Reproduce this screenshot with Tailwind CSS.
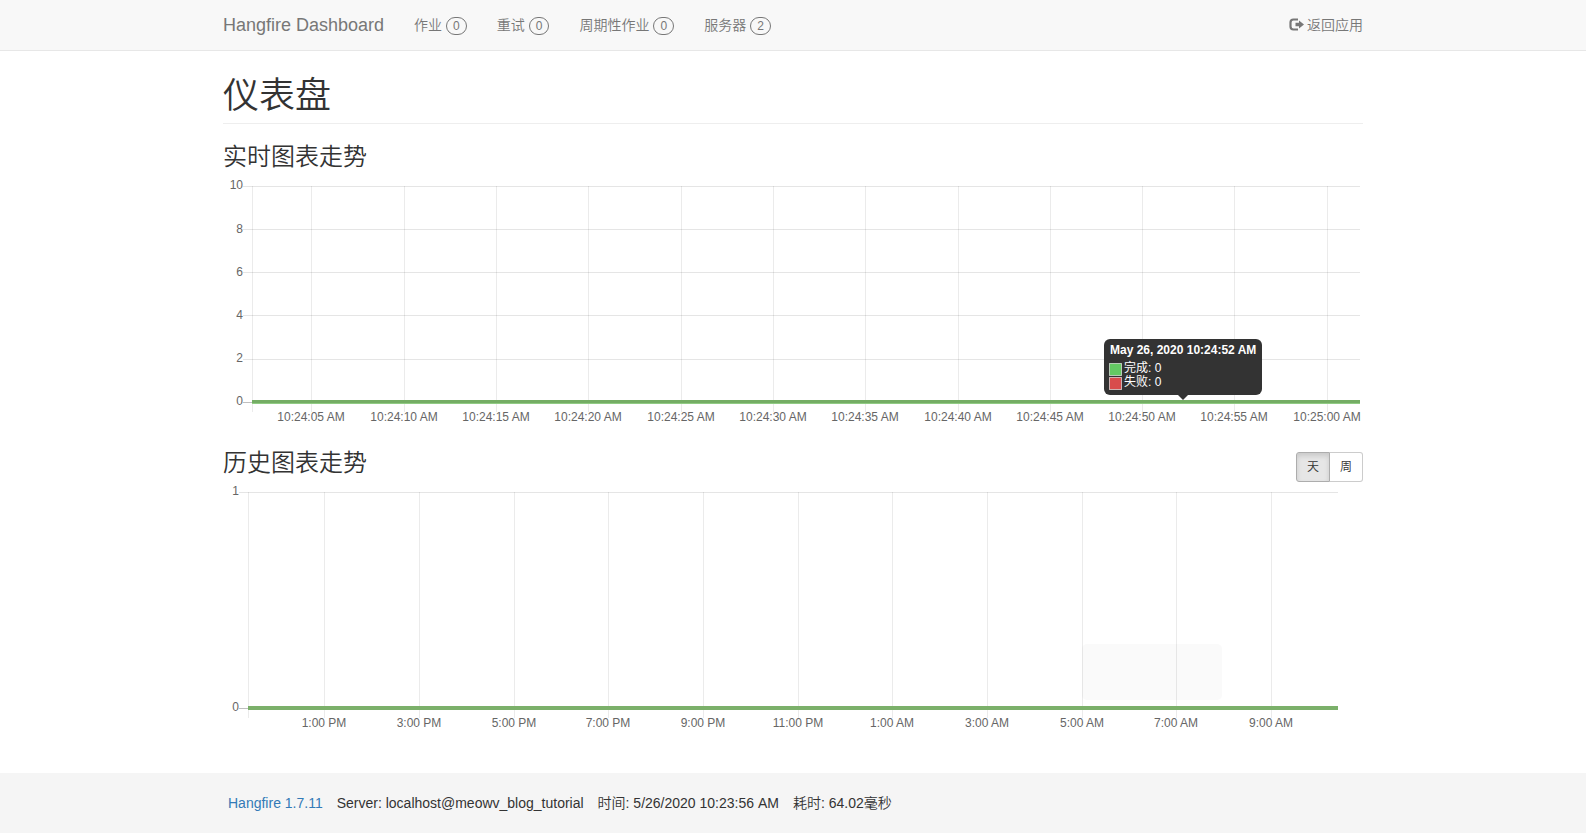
<!DOCTYPE html>
<html lang="zh-CN">
<head>
<meta charset="utf-8">
<meta name="viewport" content="width=device-width, initial-scale=1">
<title>仪表盘 - Hangfire Dashboard</title>
<script src="https://cdn.jsdelivr.net/npm/@tailwindcss/browser@4"></script>
</head>
<body class="flex min-h-screen flex-col bg-white font-['Liberation_Sans','Noto_Sans_CJK_SC',sans-serif] text-sm leading-5 font-[350] text-[#333]">
<header class="border-b border-[#e7e7e7] bg-[#f8f8f8] text-[#777]">
  <nav class="mx-auto flex h-[50px] max-w-[1140px] items-center">
    <a href="#" class="mr-[30px] text-lg leading-5">Hangfire Dashboard</a>
    <div class="flex gap-[30px]">
      <a href="#" class="flex items-center gap-1">作业 <span class="mt-px h-[18px] rounded-full border border-[#777] px-[6px] text-xs leading-4">0</span></a>
      <a href="#" class="flex items-center gap-1">重试 <span class="mt-px h-[18px] rounded-full border border-[#777] px-[6px] text-xs leading-4">0</span></a>
      <a href="#" class="flex items-center gap-1">周期性作业 <span class="mt-px h-[18px] rounded-full border border-[#777] px-[6px] text-xs leading-4">0</span></a>
      <a href="#" class="flex items-center gap-1">服务器 <span class="mt-px h-[18px] rounded-full border border-[#777] px-[6px] text-xs leading-4">2</span></a>
    </div>
    <a href="#" class="ml-auto flex items-center gap-[3px]">
      <svg class="h-[14px] w-[15px]" viewBox="0 0 15 14" aria-hidden="true"><path d="M9 1.500H4.500Q1.500 1.500 1.500 4.500v4Q1.500 11.500 4.500 11.500H9" fill="none" stroke="currentColor" stroke-width="2.200"/><path d="M10 2.500 15 6.500l-5 4V8.200H6.500V4.800H10z" fill="currentColor"/></svg>
      返回应用
    </a>
  </nav>
</header>

<main class="mx-auto w-full max-w-[1140px] grow pt-[25px]">
  <h1 class="mb-5 border-b border-[#eee] pb-[7px] text-4xl leading-10 font-[350]">仪表盘</h1>

  <section>
    <h3 class="mb-[10px] text-2xl leading-[26px] font-[350]">实时图表走势</h3>
    <svg class="block h-auto w-full overflow-visible" viewBox="0 0 1140 250" role="img" aria-label="实时图表走势">
      <path d="M20 6.500H1137M20 49.500H1137M20 92.500H1137M20 135.500H1137M20 179.500H1137" stroke="#000" stroke-opacity=".1"/>
      <path d="M20 222.500H29" stroke="#000" stroke-opacity=".25"/>
      <path d="M29.500 6V232M88.500 6V232M181.500 6V232M273.500 6V232M365.500 6V232M458.500 6V232M550.500 6V232M642.500 6V232M735.500 6V232M827.500 6V232M919.500 6V232M1011.500 6V232M1104.500 6V232" stroke="#000" stroke-opacity=".08"/>
      <path d="M29 221.500H1137" stroke="#74ad64" stroke-width="3"/>
      <path d="M29 223.500H1137" stroke="#90cb83"/>
      <g class="fill-[#666] text-xs" text-anchor="end">
        <text x="20" y="9">10</text><text x="20" y="53">8</text><text x="20" y="96">6</text><text x="20" y="139">4</text><text x="20" y="182">2</text><text x="20" y="225">0</text>
      </g>
      <g class="fill-[#666] text-xs" text-anchor="middle">
        <text x="88" y="241">10:24:05 AM</text><text x="181" y="241">10:24:10 AM</text><text x="273" y="241">10:24:15 AM</text><text x="365" y="241">10:24:20 AM</text><text x="458" y="241">10:24:25 AM</text><text x="550" y="241">10:24:30 AM</text><text x="642" y="241">10:24:35 AM</text><text x="735" y="241">10:24:40 AM</text><text x="827" y="241">10:24:45 AM</text><text x="919" y="241">10:24:50 AM</text><text x="1011" y="241">10:24:55 AM</text><text x="1104" y="241">10:25:00 AM</text>
      </g>
      <!-- Tooltip -->
      <rect x="881" y="159" width="158" height="56" rx="6" fill="#333"/>
      <path d="M955 215h10l-5 5z" fill="#333"/>
      <g stroke="#fff" stroke-opacity=".6"><rect x="886.500" y="183.500" width="12" height="12" fill="#63c963"/><rect x="886.500" y="197.500" width="12" height="12" fill="#d84c4c"/></g>
      <g class="fill-white text-xs font-normal"><text class="font-bold" x="887" y="174">May 26, 2020 10:24:52 AM</text><text x="901" y="192">完成: 0</text><text x="901" y="206">失败: 0</text></g>
    </svg>
  </section>

  <section class="mt-5">
    <div class="mb-[10px] flex h-[26px] items-start justify-between">
      <h3 class="text-2xl leading-[26px] font-[350]">历史图表走势</h3>
      <div class="mt-[2px] flex text-xs">
        <button type="button" aria-pressed="true" class="h-[30px] w-[34px] rounded-l-[3px] border border-[#adadad] bg-[#e6e6e6] shadow-[inset_0_3px_5px_rgba(0,0,0,0.125)]">天</button>
        <button type="button" aria-pressed="false" class="h-[30px] w-[33px] rounded-r-[3px] border border-l-0 border-[#ccc] bg-white">周</button>
      </div>
    </div>
    <svg class="block h-auto w-full overflow-visible" viewBox="0 0 1140 250" role="img" aria-label="历史图表走势">
      <rect x="859" y="158" width="140" height="56" rx="5" fill="#fafafa"/>
      <path d="M16 6.500H1115" stroke="#000" stroke-opacity=".1"/>
      <path d="M16 222.500H25" stroke="#000" stroke-opacity=".25"/>
      <path d="M25.500 6V232M101.500 6V232M196.500 6V232M291.500 6V232M385.500 6V232M480.500 6V232M575.500 6V232M669.500 6V232M764.500 6V232M859.500 6V232M953.500 6V232M1048.500 6V232" stroke="#000" stroke-opacity=".08"/>
      <path d="M25 222H1115" stroke="#7bb06a" stroke-width="4"/>
      <g class="fill-[#666] text-xs" text-anchor="end"><text x="16" y="9">1</text><text x="16" y="225">0</text></g>
      <g class="fill-[#666] text-xs" text-anchor="middle">
        <text x="101" y="241">1:00 PM</text><text x="196" y="241">3:00 PM</text><text x="291" y="241">5:00 PM</text><text x="385" y="241">7:00 PM</text><text x="480" y="241">9:00 PM</text><text x="575" y="241">11:00 PM</text><text x="669" y="241">1:00 AM</text><text x="764" y="241">3:00 AM</text><text x="859" y="241">5:00 AM</text><text x="953" y="241">7:00 AM</text><text x="1048" y="241">9:00 AM</text>
      </g>
    </svg>
  </section>
</main>

<footer class="bg-[#f5f5f5] py-5">
  <ul class="mx-auto flex max-w-[1140px] flex-wrap gap-[14px] px-[5px]">
    <li><a href="#" class="text-[#337ab7]">Hangfire 1.7.11</a></li>
    <li>Server: localhost@meowv_blog_tutorial</li>
    <li>时间: 5/26/2020 10:23:56 AM</li>
    <li>耗时: 64.02毫秒</li>
  </ul>
</footer>
</body>
</html>
